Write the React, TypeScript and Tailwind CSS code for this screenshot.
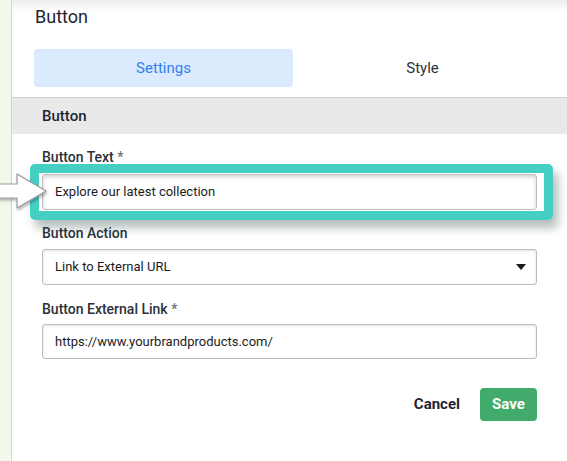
import React from "react";

const Label = ({ text, required }: { text: string; required?: boolean }) => (
  <div className="text-[14px] leading-[20px] font-medium text-[#2b313b]">
    {text}
    {required && <span className="text-[#6b7280]"> *</span>}
  </div>
);

export default function App() {
  return (
    <div className="relative flex w-[567px] h-[461px] overflow-hidden bg-white font-['Roboto',sans-serif]">
      <div className="w-[12px] shrink-0 bg-[#f1f9ec] border-r border-[#d4d4d4]" />

      <div className="flex-1 flex flex-col">
        {/* header */}
        <div className="h-[49px] pl-[23px] pt-[5px] bg-[linear-gradient(to_bottom,#ececec_0px,#ffffff_11px)]">
          <div className="text-[18px] leading-[24px] text-[#1f2530]">Button</div>
        </div>

        {/* tabs */}
        <div className="flex pl-[22px] pr-[15px] pb-[10px] border-b border-[#cccccc]">
          <div className="flex-1 h-[38px] rounded-[4px] bg-[#dbeafd] flex items-center justify-center text-[15px] text-[#2f80f0]">
            Settings
          </div>
          <div className="flex-1 h-[38px] flex items-center justify-center text-[15px] text-[#2b313b]">
            Style
          </div>
        </div>

        <div className="h-[36px] bg-[#e9e9e9] flex items-center pl-[30px] text-[15px] font-medium text-[#1f2530]">
          Button
        </div>

        {/* form */}
        <div className="pl-[30px] pr-[18px] pt-[13px] flex flex-col">
          <Label text="Button Text" required />
          <div className="relative mt-[7px] w-[495px]">
            <div className="h-[36px] border border-[#bdbdbd] rounded-[3px] shadow-[inset_0_2px_4px_rgba(0,0,0,0.18)] flex items-center pl-[12px] text-[13px] text-[#1c1c1c]">
              Explore our latest collection
            </div>
            <div className="pointer-events-none absolute left-[-12px] top-[-10px] w-[523px] h-[56px] border-[9px] border-[#45cfc3] rounded-[5px] shadow-[5px_8px_10px_rgba(40,70,70,0.35)]" />
          </div>

          <div className="mt-[13px]">
            <Label text="Button Action" />
          </div>
          <div className="mt-[6px] w-[495px] h-[36px] border border-[#bdbdbd] rounded-[3px] shadow-[inset_0_1px_3px_rgba(0,0,0,0.12)] flex items-center justify-between pl-[12px] pr-[10px] text-[13px] text-[#1c1c1c]">
            <span>Link to External URL</span>
            <svg width="10" height="6" viewBox="0 0 10 6">
              <path d="M0 0 H10 L5 6 Z" fill="#1a1a1a" />
            </svg>
          </div>

          <div className="mt-[14px]">
            <Label text="Button External Link" required />
          </div>
          <div className="mt-[5px] w-[495px] h-[35px] border border-[#bdbdbd] rounded-[3px] shadow-[inset_0_1px_3px_rgba(0,0,0,0.12)] flex items-center pl-[12px] text-[13px] text-[#1c1c1c]">
            https://www.yourbrandproducts.com/
          </div>

          <div className="mt-[29px] w-[495px] flex justify-end items-center gap-[20px]">
            <button className="text-[15px] font-bold text-[#1f2530]">Cancel</button>
            <button className="h-[33px] w-[57px] rounded-[4px] bg-[#41ab6b] text-white text-[15px] font-bold">
              Save
            </button>
          </div>
        </div>
      </div>

      {/* pointer arrow */}
      <svg
        className="absolute left-0 top-[172px]"
        width="50"
        height="40"
        viewBox="0 0 50 40"
      >
        <defs>
          <filter id="sh" x="-20%" y="-20%" width="140%" height="140%">
            <feDropShadow dx="1" dy="2" stdDeviation="1.5" floodColor="#000" floodOpacity="0.3" />
          </filter>
        </defs>
        <path
          d="M-2 12 H17 V2 L46 19 L17 36 V26 H-2 Z"
          fill="#ffffff"
          stroke="#9a9a9a"
          strokeWidth="1.2"
          strokeLinejoin="round"
          filter="url(#sh)"
        />
      </svg>
    </div>
  );
}
